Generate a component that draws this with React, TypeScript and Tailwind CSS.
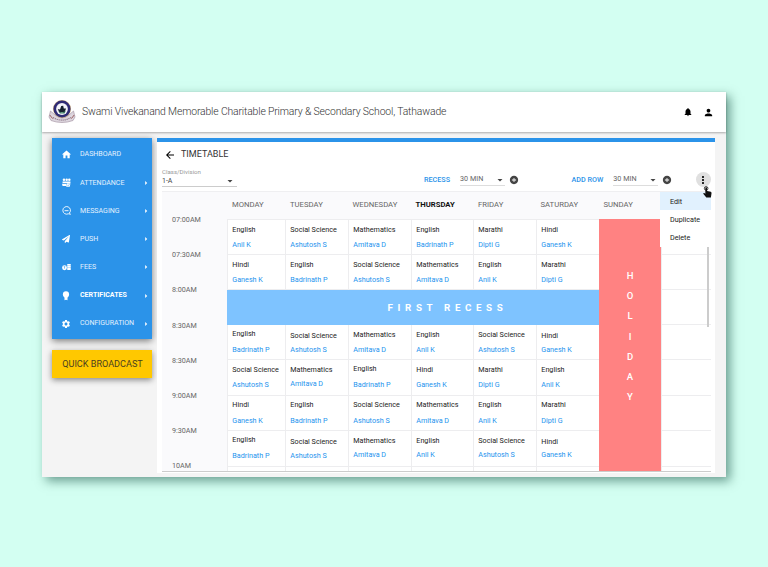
import React from "react";
import {
  MdAddCircle,
  MdArrowBack,
  MdArrowDropDown,
  MdArrowRight,
  MdHome,
  MdMoreVert,
  MdNotifications,
  MdPerson,
  MdSettings,
} from "react-icons/md";
import { FaPaperPlane } from "react-icons/fa";

function Crest() {
  return (
    <svg viewBox="0 0 28 28" className="h-7 w-7">
      <path d="M2.5 13 L7 17 Q14 23 21 17 L25.5 13 L27 19 L25 22.5 Q14 26.5 3 22.5 L1 19 Z" fill="#ddd6de" stroke="#a99aa8" strokeWidth="0.7" />
      <circle cx="14" cy="11" r="9" fill="#c9a97c" />
      <circle cx="14" cy="11" r="8.5" fill="#2f2b75" />
      <circle cx="14" cy="11" r="5.9" fill="#f4f4fa" />
      <path d="M9.8 11 L12 11.4 L13.2 8 L15.2 7.8 L15.8 10.6 L18 10.6 L16.8 14.2 L11.2 14.2 Z" fill="#16202e" />
      <path d="M10.5 13.2 L14 14.4 L17.8 13 L16.5 15.6 L12 15.6 Z" fill="#3d7d63" />
      <path d="M5 19.6 Q14 24.6 23 19.6" fill="none" stroke="#8d7686" strokeWidth="1.1" strokeDasharray="1.2 0.8" />
      <path d="M1.8 17 L4.6 20.6 M26.2 17 L23.4 20.6" stroke="#9b5f5f" strokeWidth="1" />
    </svg>
  );
}

function AttendanceIcon() {
  return (
    <svg viewBox="0 0 16 16" className="h-[9px] w-[9px]" fill="currentColor">
      <circle cx="3.5" cy="3" r="2.2" />
      <circle cx="8.3" cy="3" r="2.2" />
      <circle cx="13" cy="3" r="2.2" />
      <path d="M1 6h14v3H1zM0 10h8v4H1z" />
      <path d="M8.5 9.5h6.5l-1.2 6H7.5z" />
      <path d="M9.6 12.2l1.3 1.4 2.4-2.6" fill="none" stroke="#2b93e9" strokeWidth="1" />
    </svg>
  );
}

function MessageIcon() {
  return (
    <svg viewBox="0 0 18 18" className="h-[9px] w-[9px]" fill="none" stroke="currentColor" strokeWidth="1.8">
      <path d="M14.6 14.2A7.6 7.6 0 1 0 12.6 15.6L17 16.4Z" />
      <path d="M5 9.4h8" strokeWidth="1.8" />
    </svg>
  );
}

function FeesIcon() {
  return (
    <svg viewBox="0 0 18 16" className="h-2 w-[9px]" fill="currentColor">
      <circle cx="5" cy="9.5" r="4.8" />
      <path d="M10.5 2h7v3h-7zM10.5 5.6h7v3h-7zM10.5 9.2h7v5h-7z" />
      <path d="M3.4 7.4h3.2M5 7.4v4" fill="none" stroke="#2b93e9" strokeWidth="1.1" />
    </svg>
  );
}

function BulbIcon() {
  return (
    <svg viewBox="0 0 16 20" className="h-[10px] w-2" fill="currentColor">
      <circle cx="8" cy="6.8" r="6.2" />
      <path d="M5 12h6v6.5l-3-1.2-3 1.2z" />
    </svg>
  );
}

function HandCursor() {
  return (
    <svg viewBox="0 0 20 26" className="h-3 w-[9px]">
      <circle cx="7" cy="5" r="4" fill="none" stroke="#111" strokeWidth="1.8" />
      <path
        d="M5.2 4.5a1.9 1.9 0 0 1 3.8 0V11l8 1.6c1.4.3 2 1.2 2 2.5L17.6 25H7.4L1 17.4c-.8-1.3.5-2.6 1.8-2l2.4 1.4z"
        fill="#111"
      />
    </svg>
  );
}

const navItems = [
  { label: "DASHBOARD", icon: <MdHome className="size-[11px]" />, arrow: false, strong: false },
  { label: "ATTENDANCE", icon: <AttendanceIcon />, arrow: true, strong: false },
  { label: "MESSAGING", icon: <MessageIcon />, arrow: true, strong: false },
  { label: "PUSH", icon: <FaPaperPlane className="size-2" />, arrow: true, strong: false },
  { label: "FEES", icon: <FeesIcon />, arrow: true, strong: false },
  { label: "CERTIFICATES", icon: <BulbIcon />, arrow: true, strong: true },
  { label: "CONFIGURATION", icon: <MdSettings className="size-[10px]" />, arrow: true, strong: false },
];

const days = ["MONDAY", "TUESDAY", "WEDNESDAY", "THURSDAY", "FRIDAY", "SATURDAY", "SUNDAY"];
const times = ["07:00AM", "07:30AM", "8:00AM", "8:30AM", "8:30AM", "9:00AM", "9:30AM", "10AM"];

const teachers = {
  A: "Anil K",
  S: "Ashutosh S",
  M: "Amitava D",
  B: "Badrinath P",
  D: "Dipti G",
  G: "Ganesh K",
};
type Teacher = keyof typeof teachers;
type Lesson = [string, Teacher, string?];
type Row = { height: string; lessons: Lesson[] };

const SPREAD = "pt-1 gap-1.5";
const LOW = "pt-1.5 gap-1";
const EVEN = "pt-[5px] gap-[5px]";
const TIGHT = "pt-[5px] gap-1";

const morning: Row[] = [
  {
    height: "h-[35px]",
    lessons: [["English", "A"], ["Social Science", "S"], ["Mathematics", "M"], ["English", "B"], ["Marathi", "D"], ["Hindi", "G"]],
  },
  {
    height: "h-[35px]",
    lessons: [["Hindi", "G"], ["English", "B"], ["Social Science", "S"], ["Mathematics", "M"], ["English", "A"], ["Marathi", "D"]],
  },
];

const afternoon: Row[] = [
  {
    height: "h-[35px]",
    lessons: [["English", "B", SPREAD], ["Social Science", "S", LOW], ["Mathematics", "M"], ["English", "A"], ["Social Science", "S"], ["Hindi", "G", LOW]],
  },
  {
    height: "h-9",
    lessons: [["Social Science", "S"], ["Mathematics", "M", TIGHT], ["English", "B", SPREAD], ["Hindi", "G"], ["Marathi", "D"], ["English", "A"]],
  },
  {
    height: "h-[35px]",
    lessons: [["Hindi", "G", SPREAD], ["English", "B", SPREAD], ["Social Science", "S", SPREAD], ["Mathematics", "M", SPREAD], ["English", "A", SPREAD], ["Marathi", "D", SPREAD]],
  },
  {
    height: "h-9",
    lessons: [["English", "B", SPREAD], ["Social Science", "S", LOW], ["Mathematics", "M", TIGHT], ["English", "A", TIGHT], ["Social Science", "S", TIGHT], ["Hindi", "G", "pt-1.5 gap-[3px]"]],
  },
];

const lessonColumns = "grid grid-cols-[58px_63px_63px_62px_63px_63px]";

function LessonRow({ height, lessons }: Row) {
  return (
    <div className={`${lessonColumns} ${height} border-b border-[#ededef]`}>
      {lessons.map(([subject, teacher, spacing], i) => (
        <div key={i} className={`flex flex-col border-l border-[#ededef] pl-[4.3px] text-[7.2px] leading-[10px] whitespace-nowrap ${spacing ?? EVEN}`}>
          <span className="text-[#222]">{subject}</span>
          <span className="text-[#2493ee]">{teachers[teacher]}</span>
        </div>
      ))}
    </div>
  );
}

function MinutesPicker({ label }: { label: string }) {
  return (
    <div className="flex items-center">
      <span className="text-[7.2px] font-medium text-[#2b93e9]">{label}</span>
      <div className="ml-[10px] flex h-[11px] w-[45px] items-center justify-between border-b border-[#ddd] text-[7.2px] text-[#666]">
        30 MIN
        <MdArrowDropDown className="-mr-px size-3 text-[#444]" />
      </div>
      <MdAddCircle className="ml-1 size-[10px] text-[#444]" />
    </div>
  );
}

function Sidebar() {
  return (
    <aside className="flex w-[100px] flex-col">
      <nav className="flex h-[201px] flex-col bg-[#2b93e9] pt-[2.5px] text-white shadow-[0_2px_7px_rgba(0,0,0,0.5)]">
        {navItems.map((item) => (
          <div key={item.label} className="flex h-[28.2px] items-center">
            <span className="flex w-7 justify-center">{item.icon}</span>
            <span className={`text-[7.05px] ${item.strong ? "font-bold" : "text-[#e3f1fd]"}`}>{item.label}</span>
            {item.arrow && <MdArrowRight className="mr-px ml-auto size-[10px]" />}
          </div>
        ))}
      </nav>
      <button className="mt-[11px] h-7 bg-[#ffc800] pt-px pl-px text-[9.1px] text-[#4a4020] shadow-[0_2px_6px_rgba(0,0,0,0.45)]">
        QUICK BROADCAST
      </button>
    </aside>
  );
}

function Timetable() {
  return (
    <div className="relative ml-[5px] flex h-[281px] w-[549px] shrink-0 flex-col border-t border-b border-t-[#efeff1] border-b-[#ccc] bg-white">
      <div className="flex h-[27px] items-center bg-[#fafafc] pb-[2px] text-[7.7px] text-[#666]">
        <div className="w-[64px]" />
        <div className="grid grid-cols-[58px_62.5px_63px_62.5px_62.5px_63px_63px]">
          {days.map((day) => (
            <span key={day} className={day === "THURSDAY" ? "pl-1.5 font-bold text-[#111]" : "pl-1.5"}>
              {day}
            </span>
          ))}
        </div>
      </div>
      <div className="flex h-[252px]">
        <div className="-mt-1 h-[256px] w-[65px] overflow-hidden bg-[#fafafc] pl-[10px] text-[7.2px] leading-[10px] text-[#666]">
          {times.map((time, i) => (
            <div key={i} className="h-[35.2px]">
              {time}
            </div>
          ))}
        </div>
        <div className="w-[372px] border-t border-[#ededef]">
          {morning.map((row, i) => (
            <LessonRow key={i} {...row} />
          ))}
          <div className="flex h-[35px] items-center justify-center bg-[#7ec3ff] pt-[2px] pl-[69px] text-[9.8px] font-bold tracking-[4.6px] whitespace-pre text-white">
            FIRST RECESS
          </div>
          {afternoon.map((row, i) => (
            <LessonRow key={i} {...row} />
          ))}
          <div className={`${lessonColumns} h-1`}>
            {days.slice(0, 6).map((day) => (
              <div key={day} className="border-l border-[#ededef]" />
            ))}
          </div>
        </div>
        <div className="flex w-[62px] flex-col items-center bg-[#ff8282] pt-[47px] text-[9.5px] leading-[20.2px] font-medium text-white">
          {"HOLIDAY".split("").map((letter) => (
            <span key={letter}>{letter}</span>
          ))}
        </div>
        <div className="flex-1 border-t border-l border-[#ededef]">
          {["h-[35px]", "h-[35px]", "h-[35px]", "h-[35px]", "h-9", "h-[35px]", "h-9"].map((height, i) => (
            <div key={i} className={`border-b border-[#ededef] ${height}`} />
          ))}
        </div>
      </div>
      <div className="absolute top-[55px] right-[2px] h-[80px] w-[2px] bg-[#ccc]" />
      <div className="absolute top-0 right-0 flex w-[51px] flex-col bg-white pb-px text-[7.2px] text-[#222]">
        <div className="flex h-[18px] items-center bg-[#e1f1fe] pt-[2px] pl-[10px]">Edit</div>
        <div className="flex h-[18px] items-center pt-[2px] pl-[10px]">Duplicate</div>
        <div className="flex h-[18px] items-center pt-[2px] pl-[10px]">Delete</div>
      </div>
      <div className="absolute -top-1.5 -right-px flex">
        <HandCursor />
      </div>
    </div>
  );
}

export default function App() {
  return (
    <div className="h-[567px] w-[768px] overflow-hidden bg-[#d3fff2] pt-[92px] pl-[42px] font-['Roboto','Liberation_Sans',sans-serif]">
      <div className="flex h-[385px] w-[684px] flex-col bg-[#f4f4f4] shadow-[4px_4px_10px_rgba(0,60,45,0.5)]">
        <header className="relative flex h-10 shrink-0 items-center bg-white pl-1.5 shadow-[0_1px_2px_rgba(0,0,0,0.3)]">
          <Crest />
          <h1 className="ml-1.5 text-[10.4px] font-light tracking-[-0.15px] whitespace-nowrap text-[#333]">
            Swami Vivekanand Memorable Charitable Primary &amp; Secondary School, Tathawade
          </h1>
          <MdNotifications className="ml-auto size-[10px] text-black" />
          <MdPerson className="mr-3 ml-[10px] size-[11px] text-black" />
        </header>
        <div className="flex pt-1.5 pl-[10px]">
          <Sidebar />
          <main className="ml-[5px] flex h-[335px] w-[558px] flex-col border-t-4 border-[#2b93e9] bg-white">
            <div className="flex h-[25px] items-center pl-[7px]">
              <MdArrowBack className="size-3 text-black" />
              <h2 className="ml-[5px] pt-px text-[9px] text-[#333]">TIMETABLE</h2>
            </div>
            <div className="flex h-6 items-start">
              <div className="ml-[5px] w-[75px] border-b border-[#ccc] text-[7px] leading-[9px]">
                <div className="text-[6.1px] text-[#999]">Class/Division</div>
                <div className="flex h-[10px] items-center justify-between text-[#444]">
                  1-A
                  <MdArrowDropDown className="mr-px size-3" />
                </div>
              </div>
              <div className="mt-px ml-[187px] flex h-6 items-center">
                <MinutesPicker label="RECESS" />
              </div>
              <div className="mt-px ml-[52.5px] flex h-6 items-center">
                <MinutesPicker label="ADD ROW" />
              </div>
              <div className="mt-[5px] ml-[23.5px] flex size-[15px] items-center justify-center rounded-full bg-[#e0e0e0]">
                <MdMoreVert className="size-3 text-black" />
              </div>
            </div>
            <Timetable />
          </main>
        </div>
      </div>
    </div>
  );
}
